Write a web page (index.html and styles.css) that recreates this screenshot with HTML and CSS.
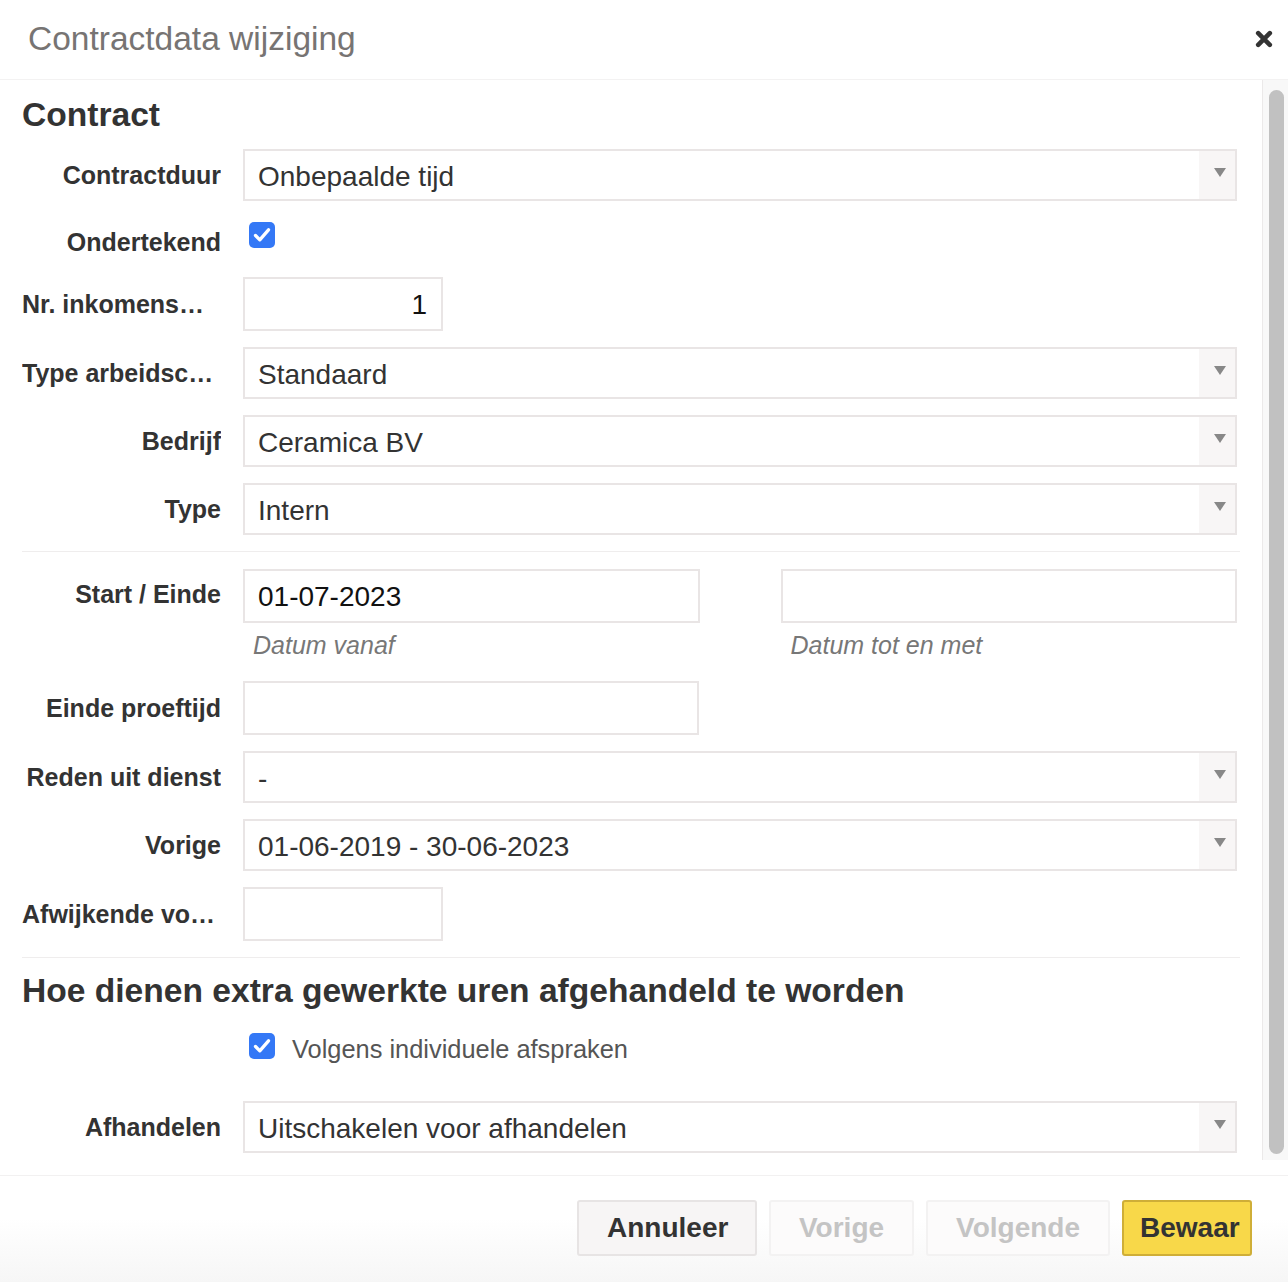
FILE: index.html
```html
<!DOCTYPE html>
<html lang="nl">
<head>
<meta charset="utf-8">
<title>Contractdata wijziging</title>
<link rel="stylesheet" href="styles.css">
</head>
<body>
<div class="dialog">
  <header class="dlg-head">
    <h1 class="dlg-title">Contractdata wijziging</h1>
    <button class="close" aria-label="Sluiten">
      <svg width="18" height="18" viewBox="0 0 18 18"><path d="M3.2 3.2 L14.8 14.8 M14.8 3.2 L3.2 14.8" stroke="#333" stroke-width="4.6" stroke-linecap="round"/></svg>
    </button>
  </header>

  <div class="dlg-main">
    <div class="dlg-content">
      <h2 class="section-title first">Contract</h2>

      <div class="row">
        <div class="lbl">Contractduur</div>
        <div class="field"><div class="select"><span class="sel-text">Onbepaalde tijd</span><span class="sel-arrow"><i></i></span></div></div>
      </div>

      <div class="row row-check">
        <div class="lbl lbl-check">Ondertekend</div>
        <div class="field field-check">
          <span class="cb"><svg width="26" height="26" viewBox="0 0 26 26"><rect x="0" y="0" width="26" height="26" rx="5" fill="#3478f6"/><path d="M6.5 13.5 L10.8 17.8 L19.5 7.8" fill="none" stroke="#fff" stroke-width="3.3" stroke-linecap="round" stroke-linejoin="round"/></svg></span>
        </div>
      </div>

      <div class="row">
        <div class="lbl trunc">Nr. inkomens…</div>
        <div class="field"><div class="input small num">1</div></div>
      </div>

      <div class="row">
        <div class="lbl trunc">Type arbeidsc…</div>
        <div class="field"><div class="select"><span class="sel-text">Standaard</span><span class="sel-arrow"><i></i></span></div></div>
      </div>

      <div class="row">
        <div class="lbl">Bedrijf</div>
        <div class="field"><div class="select"><span class="sel-text">Ceramica BV</span><span class="sel-arrow"><i></i></span></div></div>
      </div>

      <div class="row">
        <div class="lbl">Type</div>
        <div class="field"><div class="select"><span class="sel-text">Intern</span><span class="sel-arrow"><i></i></span></div></div>
      </div>

      <hr class="sep sep-a">

      <div class="row row-top row-dates">
        <div class="lbl lbl-input">Start / Einde</div>
        <div class="field dates">
          <div class="date-col">
            <div class="input">01-07-2023</div>
            <div class="help">Datum vanaf</div>
          </div>
          <div class="date-col">
            <div class="input"></div>
            <div class="help">Datum tot en met</div>
          </div>
        </div>
      </div>

      <div class="row">
        <div class="lbl">Einde proeftijd</div>
        <div class="field"><div class="input half"></div></div>
      </div>

      <div class="row">
        <div class="lbl">Reden uit dienst</div>
        <div class="field"><div class="select"><span class="sel-text">-</span><span class="sel-arrow"><i></i></span></div></div>
      </div>

      <div class="row">
        <div class="lbl">Vorige</div>
        <div class="field"><div class="select"><span class="sel-text">01-06-2019 - 30-06-2023</span><span class="sel-arrow"><i></i></span></div></div>
      </div>

      <div class="row">
        <div class="lbl trunc">Afwijkende vo…</div>
        <div class="field"><div class="input small"></div></div>
      </div>

      <hr class="sep sep-b">

      <h2 class="section-title second">Hoe dienen extra gewerkte uren afgehandeld te worden</h2>

      <div class="row row-top row-check2">
        <div class="lbl"></div>
        <div class="field field-check2">
          <span class="cb"><svg width="26" height="26" viewBox="0 0 26 26"><rect x="0" y="0" width="26" height="26" rx="5" fill="#3478f6"/><path d="M6.5 13.5 L10.8 17.8 L19.5 7.8" fill="none" stroke="#fff" stroke-width="3.3" stroke-linecap="round" stroke-linejoin="round"/></svg></span>
          <span class="cb-text">Volgens individuele afspraken</span>
        </div>
      </div>

      <div class="row">
        <div class="lbl">Afhandelen</div>
        <div class="field"><div class="select"><span class="sel-text">Uitschakelen voor afhandelen</span><span class="sel-arrow"><i></i></span></div></div>
      </div>
    </div>

    <div class="scrollbar"><div class="thumb"></div></div>
  </div>

  <footer class="dlg-foot">
    <button class="btn btn-default">Annuleer</button>
    <button class="btn btn-disabled">Vorige</button>
    <button class="btn btn-disabled">Volgende</button>
    <button class="btn btn-primary">Bewaar</button>
  </footer>
</div>
</body>
</html>
```

FILE: styles.css
```css
* { box-sizing: border-box; }

html, body {
  margin: 0;
  padding: 0;
  background: #fff;
}

body {
  font-family: "Liberation Sans", Arial, Helvetica, sans-serif;
  color: #333;
}

.dialog {
  width: 1288px;
  height: 1282px;
  display: flex;
  flex-direction: column;
  overflow: hidden;
}

/* Header */
.dlg-head {
  height: 80px;
  flex: none;
  display: flex;
  align-items: center;
  justify-content: space-between;
  padding: 0 15px 2px 28px;
  border-bottom: 1px solid #f3f2f2;
}

.dlg-title {
  margin: 0;
  font-size: 33.5px;
  font-weight: normal;
  color: #777473;
  line-height: 40px;
}

.close {
  border: 0;
  background: none;
  padding: 0;
  width: 18px;
  height: 18px;
  display: block;
  cursor: pointer;
}
.close svg { display: block; }

/* Main */
.dlg-main {
  flex: none;
  height: 1095px;
  display: flex;
  overflow: hidden;
}

.dlg-content {
  flex: 1;
  padding: 0 22px;
  overflow: hidden;
}

.section-title {
  margin: 0;
  font-size: 33.6px;
  font-weight: bold;
  line-height: 40px;
  color: #333;
}
.section-title.first { margin: 15px 0 14px; }
.section-title.second { margin: 13px 0 22px; }

.row {
  display: flex;
  align-items: center;
  gap: 22px;
  padding-right: 3px;
  margin-bottom: 16px;
}

.row-top { align-items: flex-start; }

.lbl {
  flex: none;
  width: 199px;
  text-align: right;
  font-size: 25px;
  font-weight: bold;
  line-height: 30px;
  color: #333;
  white-space: nowrap;
  overflow: hidden;
}
.lbl.trunc { text-align: left; }
.lbl-check { padding-top: 6px; }
.lbl-input { line-height: 50px; }

.field {
  flex: 1;
  min-width: 0;
}

.row-check { height: 44px; }
.field-check { align-self: flex-start; padding: 5px 0 0 6px; }

.cb { display: block; width: 26px; height: 26px; flex: none; }
.cb svg { display: block; }

.row-check2 { margin-bottom: 37px; }
.field-check2 {
  display: flex;
  align-items: flex-start;
  gap: 17px;
  padding-left: 6px;
}
.cb-text {
  font-size: 25.4px;
  line-height: 30px;
  margin-top: 1px;
  color: #555;
}

/* Select */
.select {
  height: 52px;
  border: 2px solid #e9e5e5;
  display: flex;
  background: #fff;
}
.sel-text {
  flex: 1;
  padding: 2px 0 0 13px;
  font-size: 28px;
  line-height: 48px;
  color: #333;
  white-space: nowrap;
}
.sel-arrow {
  flex: none;
  width: 36px;
  background: #f8f6f6;
  display: flex;
  justify-content: flex-start;
  padding: 17px 0 0 15px;
}
.sel-arrow i {
  display: block;
  width: 0;
  height: 0;
  border-left: 6px solid transparent;
  border-right: 6px solid transparent;
  border-top: 9px solid #888;
}

/* Inputs */
.input {
  height: 54px;
  border: 2px solid #e9e5e5;
  background: #fff;
  padding: 1px 13px 0;
  font-size: 28px;
  line-height: 49px;
  color: #111;
}
.input.small { width: 200px; }
.input.half { width: 456px; }
.input.num { text-align: right; padding-right: 14px; }

.dates {
  display: grid;
  grid-template-columns: 1fr 1fr;
  column-gap: 81px;
}
.help {
  margin-top: 7px;
  padding-left: 10px;
  font-size: 25px;
  font-style: italic;
  line-height: 30px;
  color: #777;
}
.row-dates { margin-bottom: 21px; }

/* Separators */
.sep {
  border: 0;
  height: 1px;
  background: #efeded;
  margin: 0;
}
.sep-a { margin: 0 0 17px; }
.sep-b { margin: 0; }

/* Scrollbar */
.scrollbar {
  flex: none;
  width: 26px;
  height: 1080px;
  background: #f8f8f8;
  border-left: 1px solid #ebe9e9;
  padding: 10px 4px 0 6px;
}
.thumb {
  width: 15px;
  height: 1064px;
  border-radius: 8px;
  background: #c1c1c1;
}

/* Footer */
.dlg-foot {
  flex: 1;
  border-top: 1px solid #f2f1f1;
  background: linear-gradient(#ffffff, #ffffff 40%, #f6f6f6);
  display: flex;
  justify-content: flex-end;
  align-items: flex-start;
  gap: 12px;
  padding: 24px 36px 0 0;
}

.btn {
  height: 56px;
  font-family: "Liberation Sans", Arial, Helvetica, sans-serif;
  font-size: 28px;
  font-weight: bold;
  border-radius: 3px;
  border: 2px solid #e7e4e4;
  padding: 0 28px;
  line-height: 52px;
  cursor: pointer;
}
.btn-default {
  background: #f7f5f5;
  color: #333;
  width: 180px;
}
.btn-disabled {
  background: #fcfbfb;
  border-color: #f3f2f2;
  color: #c4c4c4;
}
.btn-primary {
  background: #f8d849;
  border-color: #cfae37;
  color: #333;
  padding: 0 16px;
  width: 130px;
}
```
